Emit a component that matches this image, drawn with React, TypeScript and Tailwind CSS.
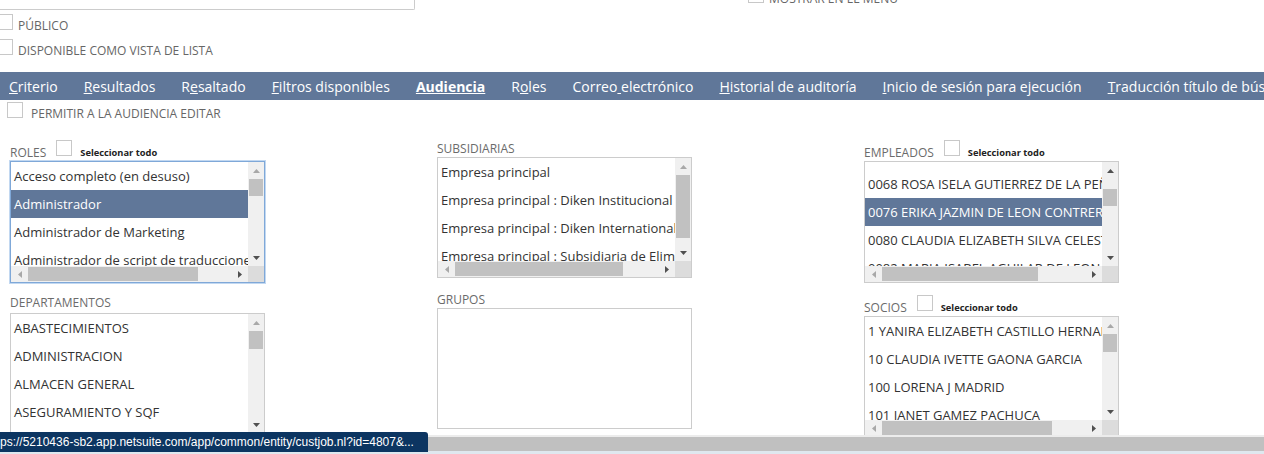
const TABS: { pre: string; key: string; post: string; active?: boolean }[] = [
  { pre: "", key: "C", post: "riterio" },
  { pre: "", key: "R", post: "esultados" },
  { pre: "R", key: "e", post: "saltado" },
  { pre: "", key: "F", post: "iltros disponibles" },
  { pre: "", key: "Audiencia", post: "", active: true },
  { pre: "R", key: "o", post: "les" },
  { pre: "Correo", key: " ", post: "electrónico" },
  { pre: "", key: "H", post: "istorial de auditoría" },
  { pre: "", key: "I", post: "nicio de sesión para ejecución" },
  { pre: "", key: "T", post: "raducción título de búsqueda" },
];

function Checkbox({ className = "" }: { className?: string }) {
  return <div className={`h-[16px] w-[16px] shrink-0 border border-[#c8c8c8] bg-white ${className}`} />;
}

function Arrow({ dir, dark }: { dir: "up" | "down" | "left" | "right"; dark?: boolean }) {
  const pts = {
    up: "0,4 7,4 3.5,0",
    down: "0,0 7,0 3.5,4",
    left: "4,0 4,7 0,3.5",
    right: "0,0 0,7 4,3.5",
  }[dir];
  const vertical = dir === "up" || dir === "down";
  return (
    <svg
      aria-hidden="true"
      width={vertical ? 7 : 4}
      height={vertical ? 4 : 7}
      viewBox={vertical ? "0 0 7 4" : "0 0 4 7"}
      className="block"
    >
      <polygon points={pts} fill={dark ? "#505050" : "#a8a8a8"} />
    </svg>
  );
}

type BoxProps = {
  items: string[];
  selected?: number;
  top?: string;
  height: string;
  vThumb?: string;
  upDark?: boolean;
  hThumb?: string;
  focus?: boolean;
};

function ListBox({ items, selected, top = "", height, vThumb, upDark, hThumb, focus }: BoxProps) {
  return (
    <div
      className={`flex w-[255px] flex-col bg-white ${height} ${
        focus ? "border border-[#7fa8d8] shadow-[0_0_0_1px_#c2d8f1]" : "border border-[#cccccc]"
      }`}
    >
      <div className="flex min-h-0 flex-1">
        <div className={`min-w-0 flex-1 overflow-hidden ${top}`}>
          {items.map((it, i) => (
            <div
              key={i}
              className={`h-[28px] whitespace-nowrap px-[3px] text-[13px] leading-[28px] ${
                i === selected ? "bg-[#607799] text-white" : "text-[#333333]"
              }`}
            >
              {it}
            </div>
          ))}
        </div>
        {vThumb && (
          <div className="flex w-[16px] flex-col bg-[#f0f0f0]">
            <div className="flex h-[17px] items-center justify-center">
              <Arrow dir="up" dark={upDark} />
            </div>
            <div className={`ml-[1px] w-[14px] bg-[#c1c1c1] ${vThumb}`} />
            <div className="flex-1" />
            <div className="flex h-[17px] items-center justify-center">
              <Arrow dir="down" dark />
            </div>
          </div>
        )}
      </div>
      {hThumb && (
        <div className="flex h-[16px]">
          <div className="flex flex-1 items-center bg-[#f0f0f0]">
            <div className="flex w-[17px] justify-center">
              <Arrow dir="left" />
            </div>
            <div className={`h-[14px] bg-[#c1c1c1] ${hThumb}`} />
            <div className="flex-1" />
            <div className="flex w-[17px] justify-center">
              <Arrow dir="right" dark />
            </div>
          </div>
          <div className="w-[16px] bg-[#dcdcdc]" />
        </div>
      )}
    </div>
  );
}

function SelectHeader({ label }: { label: string }) {
  return (
    <div className="flex h-[20px] items-start">
      <span className="mr-[10px] pt-[5px] text-[12px] leading-[16px] text-[#6b6b6b]">{label}</span>
      <Checkbox className="mr-[8px]" />
      <span className="pt-[7px] text-[9.3px] font-bold leading-[12px] text-[#222]">Seleccionar todo</span>
    </div>
  );
}

function Label({ text }: { text: string }) {
  return <div className="text-[12px] leading-[16px] text-[#6b6b6b]">{text}</div>;
}

export default function App() {
  return (
    <div className="relative h-[454px] w-[1264px] overflow-hidden bg-white font-['Open_Sans',sans-serif]">
      <div className="flex h-full flex-col">
        <div className="h-[435px] overflow-hidden">
          {/* header fields */}
          <div className="flex">
            <div className="w-[748px]">
              <div className="h-[10px] w-[415px] rounded-br-[2px] border-b border-r border-[#cccccc]" />
              <div className="mt-[4px] flex items-start">
                <Checkbox className="ml-[-3px]" />
                <span className="ml-[5px] pt-[4px] text-[12px] leading-[16px] text-[#666]">PÚBLICO</span>
              </div>
              <div className="mt-[5px] flex items-start">
                <Checkbox className="ml-[-3px]" />
                <span className="ml-[5px] pt-[4px] text-[12px] leading-[16px] text-[#666]">
                  DISPONIBLE COMO VISTA DE LISTA
                </span>
              </div>
            </div>
            <div className="mt-[-13px] flex items-start">
              <Checkbox />
              <span className="ml-[5px] pt-[4px] text-[12px] leading-[16px] text-[#666]">MOSTRAR EN EL MENÚ</span>
            </div>
          </div>

          {/* tabs */}
          <div className="mt-[13px] flex h-[28px] items-center gap-[26px] overflow-hidden whitespace-nowrap bg-[#607799] pl-[9px] text-[14px] text-white">
            {TABS.map((t, i) => (
              <span key={i} className={t.active ? "font-bold underline" : ""}>
                {t.pre}
                {t.active ? t.key : <span className="underline">{t.key}</span>}
                {t.post}
              </span>
            ))}
          </div>

          <div className="ml-[7px] mt-[2px] flex items-start">
            <Checkbox />
            <span className="ml-[8px] pt-[4px] text-[12px] leading-[16px] text-[#666]">
              PERMITIR A LA AUDIENCIA EDITAR
            </span>
          </div>

          {/* audience lists */}
          <div className="mt-[18px] grid grid-cols-[427px_427px_1fr] pl-[10px]">
            <div>
              <SelectHeader label="ROLES" />
              <div className="mt-[1px]">
                <ListBox
                  focus
                  height="h-[122px]"
                  items={[
                    "Acceso completo (en desuso)",
                    "Administrador",
                    "Administrador de Marketing",
                    "Administrador de script de traducciones",
                  ]}
                  selected={1}
                  vThumb="h-[17px]"
                  hThumb="w-[170px]"
                />
              </div>
              <div className="mt-[12px]">
                <Label text="DEPARTAMENTOS" />
              </div>
              <div className="mt-[2px]">
                <ListBox
                  height="h-[121px]"
                  items={[
                    "ABASTECIMIENTOS",
                    "ADMINISTRACION",
                    "ALMACEN GENERAL",
                    "ASEGURAMIENTO Y SQF",
                    "CALIDAD",
                  ]}
                  vThumb="h-[18px]"
                />
              </div>
            </div>

            <div>
              <div className="pt-[1px]">
                <Label text="SUBSIDIARIAS" />
              </div>
              <div>
                <ListBox
                  height="h-[121px]"
                  items={[
                    "Empresa principal",
                    "Empresa principal : Diken Institucional",
                    "Empresa principal : Diken International",
                    "Empresa principal : Subsidiaria de Eliminación",
                  ]}
                  vThumb="h-[63px]"
                  hThumb="w-[168px]"
                />
              </div>
              <div className="mt-[14px]">
                <Label text="GRUPOS" />
              </div>
              <div>
                <ListBox height="h-[121px]" items={[]} />
              </div>
            </div>

            <div>
              <SelectHeader label="EMPLEADOS" />
              <div className="mt-[1px]">
                <ListBox
                  height="h-[122px]"
                  top="pt-[8px]"
                  items={[
                    "0068 ROSA ISELA GUTIERREZ DE LA PEÑA",
                    "0076 ERIKA JAZMIN DE LEON CONTRERAS",
                    "0080 CLAUDIA ELIZABETH SILVA CELESTINO",
                    "0082 MARIA ISABEL AGUILAR DE LEON",
                  ]}
                  selected={1}
                  upDark
                  vThumb="mt-[10px] h-[17px]"
                  hThumb="w-[156px]"
                />
              </div>
              <div className="mt-[12px]">
                <SelectHeader label="SOCIOS" />
              </div>
              <div className="mt-[1px]">
                <ListBox
                  height="h-[121px]"
                  items={[
                    "1 YANIRA ELIZABETH CASTILLO HERNANDEZ",
                    "10 CLAUDIA IVETTE GAONA GARCIA",
                    "100 LORENA J MADRID",
                    "101 JANET GAMEZ PACHUCA",
                  ]}
                  vThumb="h-[18px]"
                  hThumb="w-[170px]"
                />
              </div>
            </div>
          </div>
        </div>

        {/* page scrollbar */}
        <div className="h-[2px] bg-[#ececec]" />
        <div className="h-[14px] bg-[#c0c0c0]" />
        <div className="flex-1 bg-[#dfe8ef]" />
      </div>

      {/* status bubble */}
      <div className="absolute bottom-[2px] left-0 flex h-[20px] w-[428px] items-center overflow-hidden rounded-tr-[3px] bg-[#0c3561] font-['Liberation_Sans',sans-serif] text-[12px] text-white">
        <span className="whitespace-nowrap">ps://5210436-sb2.app.netsuite.com/app/common/entity/custjob.nl?id=4807&amp;...</span>
      </div>
    </div>
  );
}
